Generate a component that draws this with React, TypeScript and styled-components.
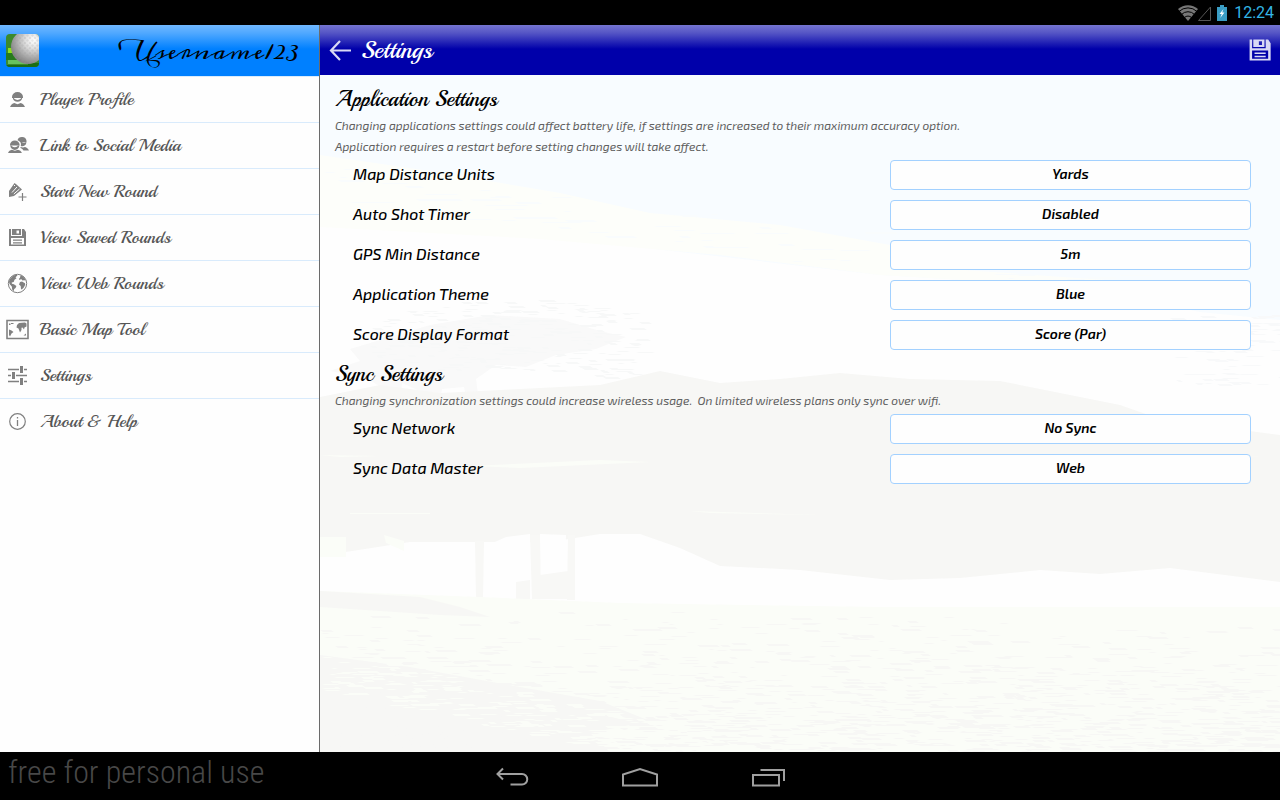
import React, { useId } from "react";
import styled, { createGlobalStyle } from "styled-components";

const script = `Playball, "Liberation Serif", serif`;
const signature = `Meddon, Playball, "Liberation Serif", serif`;
const sans = `"Exo 2", "Open Sans", sans-serif`;

const GlobalStyle = createGlobalStyle`
  *, *::before, *::after { box-sizing: border-box; }
  body { margin: 0; background: #000; font-family: ${sans}; }
`;

const Page = styled.div`
  min-height: 100vh;
  display: flex;
  flex-direction: column;
`;

const StatusBar = styled.header`
  height: 25px;
  padding: 0 6px 0 0;
  display: flex;
  justify-content: flex-end;
  align-items: center;
  background: #000;
  color: #33b5e5;
  font: 400 16px/24px Roboto, sans-serif;
`;

const StatusIcons = styled.svg`
  display: block;
  margin-right: 6px;
`;

const Body = styled.div`
  flex: 1;
  display: grid;
  grid-template-columns: minmax(0, 1fr) minmax(0, 3fr);
`;

const Sidebar = styled.aside`
  background: #fefefe;
  border-right: 1px solid #6b6b6b;
`;

const UserHeader = styled.div`
  height: 52px;
  padding: 0 20px 0 6px;
  display: flex;
  align-items: center;
  justify-content: space-between;
  background: linear-gradient(#70b8ff 0, #50a8ff 8px, #0080ff 24px);
  border-bottom: 1px solid #d9ebfc;
`;

const UserName = styled.span`
  font: 400 23px/46px ${signature};
  color: #000;
`;

const Menu = styled.ul`
  list-style: none;
  margin: 0;
  padding: 0;
`;

const MenuItem = styled.li`
  &:not(:last-child) { border-bottom: 1px solid #d9ebfc; }
`;

const MenuLink = styled.a`
  height: 45px;
  padding-left: 5px;
  display: flex;
  align-items: center;
  gap: 10px;
  color: #555;
  font: 400 18px/24px ${script};
  text-decoration: none;
`;

const MenuLabel = styled.span`
  padding-bottom: 2px;
`;

const MenuIcon = styled.svg`
  width: 25px;
  height: 25px;
  flex: none;
  color: #808080;
`;

const Main = styled.main`
  position: relative;
  isolation: isolate;
  background: #fefefe;
  overflow: hidden;
`;

const Backdrop = styled.svg`
  position: absolute;
  inset: 50px 0 0;
  width: 100%;
  height: calc(100% - 50px);
  z-index: -1;
`;

const TitleBar = styled.div`
  height: 50px;
  padding: 0 8px;
  display: flex;
  align-items: center;
  gap: 8px;
  color: #fff;
  background: linear-gradient(#7474d0 0, #5555c5 8px, #0000aa 24px);
`;

const Title = styled.h1`
  flex: 1;
  margin: 0;
  font: 400 25px/30px ${script};
`;

const IconButton = styled.button`
  padding: 0;
  border: 0;
  background: none;
  color: #d9d9f5;
  display: grid;
  place-items: center;
  cursor: pointer;
`;

const Section = styled.section`
  padding: 9px 29px 0 15px;
`;

const SectionTitle = styled.h2`
  margin: 0 0 1px;
  font: 400 22px/30px ${script};
  color: #000;
`;

const Note = styled.p`
  margin: 0 0 3px;
  font: italic 400 12px/21px ${sans};
  color: #606060;
  white-space: pre-line;
`;

const Rows = styled.div`
  padding-left: 18px;
  display: grid;
  gap: 10px;
`;

const Row = styled.div`
  display: grid;
  grid-template-columns: 537fr 361fr;
  align-items: start;
`;

const RowLabel = styled.label`
  font: italic 500 16px/28px ${sans};
  color: #000;
`;

const Choice = styled.select`
  appearance: none;
  width: 100%;
  height: 30px;
  padding: 0 4px 2px;
  border: 1px solid #a3d1ff;
  border-radius: 4px;
  background: #fefefe;
  color: #000;
  font: italic 600 14px/26px ${sans};
  text-align: center;
  text-align-last: center;
`;

const NavBar = styled.footer`
  height: 48px;
  display: grid;
  grid-template-columns: 1fr auto 1fr;
  background: #000;
`;

const Watermark = styled.span`
  padding-left: 8px;
  font: 300 32px/40px "Roboto Condensed", Roboto, sans-serif;
  color: #484848;
  white-space: nowrap;
`;

const NavButtons = styled.nav`
  display: grid;
  grid-template-columns: repeat(3, 128px);
  padding-top: 2px;
`;

const Floppy = () => (
  <>
    <path
      fill="currentColor"
      fillRule="evenodd"
      d="M4 4h2v7h11V4h2l2 3v14H4zM6 13v6.500h13V13z"
    />
    <path fill="currentColor" d="M7 4h4.500v6H7zM14 4h2v6h-2zM11 4h4v1.500h-4zM11 8.500h4V10h-4zM8 14.500h9v1.200H8zM8 17.200h9v1.200H8z" />
  </>
);

const icons: Record<string, React.ReactNode> = {
  player: (
    <g fill="currentColor">
      <path d="M7 10a5.500 5 0 0 1 11 0v1H7z" />
      <path d="M7.800 11h1.200v.6q3.500 2.600 7 0V11h1.200a4.800 4.800 0 0 1-9.400 0z" />
      <path d="M5 20c1-2.400 2.500-3.600 4.300-4l3.200 1.200 3.200-1.200c1.800.4 3.300 1.600 4.300 4z" />
    </g>
  ),
  social: (
    <g fill="currentColor">
      <path d="M12.500 7.200a4.600 4.400 0 0 1 9 .6v1.400h-6.200a6 6 0 0 0-2.800-2z" />
      <path d="M15.500 9h1.500q1.800 1.600 3.500.2h.9a4.200 4.200 0 0 1-5.600 3.900q.6-1.800-.3-4.100z" />
      <path d="M15.500 14l2.500.6 2-.6c1.700.6 3.200 1.700 4 3.600h-5.500c-.7-1.200-1.500-2-3-2.600z" />
      <path d="M5 11.800a4.800 4.400 0 0 1 9.600 0v.8H5z" />
      <path d="M5.300 12.400h1.300v.6q3.200 2.400 6.200 0v-.6h1.500a4.500 4.500 0 0 1-9 0z" />
      <path d="M3 20c.8-2 2-2.900 3.900-3.300l3 1 3-1c1.900.4 3.200 1.300 4 3.300z" />
    </g>
  ),
  round: (
    <>
      <path fill="currentColor" d="M9.500 4l2 1.500 5.500 5-8 6.500-5 1v-6z" />
      <path d="M7 13.500l5-5.500M8.800 15l5.700-5M10 6l-1 1" stroke="#fefefe" fill="none" />
      <path d="M17.500 14v8M13.500 18h8" stroke="currentColor" strokeWidth="1.200" />
    </>
  ),
  saved: <Floppy />,
  web: (
    <>
      <circle cx="12.500" cy="12.500" r="9.200" fill="none" stroke="currentColor" />
      <path
        fill="currentColor"
        d="M4.500 8.500L8 4.800l3.500-1.300 1 1-2 1.700 1 1-2 1.600-.8 2.200-2 .6.200 1.200 2 .4 2.500 1.700-.8 2.200-1.400.8-.5 2.300-1.500-1.800-.4-3L4.500 13l-.5-2.500zM15.500 4.300l2 .7 2.200 2.200.9 2.200-1.600-.2-1.500.2-1.400-1.400-1.400 1L13.800 8l1.200-1.200zM15 11l2-.5 3 1.800.2 1.500-1.400 2.700-2 2-.8-.4-.3-3-1.700-1.500z"
      />
    </>
  ),
  map: (
    <>
      <path d="M2 3.500h21v18H2z" fill="none" stroke="currentColor" strokeWidth="1.600" />
      <path
        fill="currentColor"
        d="M4 6.500h1.500V8H4zM6 6h2.500v1H6zM4 12.500l2.500 1L8.500 15l-2 1.500L5 19.500 4 18zM12 8l2-2 6-.5 1.500 1v3l-2 1-.5 2-1.500-2-1 .2v2.300l-1.500 2.500-1.500-4-2-1zM18.500 18.500l2.500-2v2z"
      />
    </>
  ),
  settings: (
    <g stroke="currentColor" fill="none">
      <path strokeWidth="1.400" d="M3 6.500h11M19 6.500h3M3 12.500h3M11 12.500h11M3 18.500h11M19 18.500h3" />
      <path strokeWidth="3" d="M16.500 3v7M8.500 9v7M16.500 15v7" />
    </g>
  ),
  about: (
    <>
      <circle cx="12.500" cy="12.500" r="7.800" fill="none" stroke="currentColor" strokeWidth="1.200" />
      <path stroke="currentColor" strokeWidth="1.300" d="M12.500 11v6M12.500 8v1.500" />
    </>
  ),
};

const menu = [
  ["player", "Player Profile"],
  ["social", "Link to Social Media"],
  ["round", "Start New Round"],
  ["saved", "View Saved Rounds"],
  ["web", "View Web Rounds"],
  ["map", "Basic Map Tool"],
  ["settings", "Settings"],
  ["about", "About & Help"],
];

const GolfBall = () => (
  <svg width="33" height="33" viewBox="0 0 33 33" aria-hidden="true">
    <defs>
      <clipPath id="tile"><rect width="33" height="33" rx="4" /></clipPath>
      <radialGradient id="ball" cx=".66" cy=".3" r=".7">
        <stop offset="0" stopColor="#fff" />
        <stop offset=".35" stopColor="#dedede" />
        <stop offset="1" stopColor="#858585" />
      </radialGradient>
      <pattern id="dimples" width="5" height="5" patternUnits="userSpaceOnUse">
        <circle cx="1.500" cy="1.500" r="1.200" fill="#999" opacity=".22" />
        <circle cx="4" cy="4" r="1.200" fill="#999" opacity=".22" />
      </pattern>
    </defs>
    <g clipPath="url(#tile)">
      <path fill="#3c8a2c" d="M0 0h33v33H0z" />
      <path fill="#8be01c" d="M2 14h6v5H2z" />
      <path fill="#267a1c" d="M0 19h33v7H0z" />
      <path fill="#67c25e" d="M2 26h18l5 4H2z" />
      <path fill="#1b6d14" d="M22 29h11v4H0v-2h22z" />
      <circle cx="22" cy="13" r="17" fill="url(#ball)" />
      <circle cx="22" cy="13" r="17" fill="url(#dimples)" />
    </g>
  </svg>
);

/* Horizontal flecks scattered over a region; a fixed seed keeps the scenery the same on each load. */
const flecks = (seed: number, count: number, place: (a: number, b: number) => [number, number], maxW: number) => {
  let s = seed;
  const rnd = () => (s = (s * 16807) % 2147483647) / 2147483647;
  rnd();
  let d = "";
  for (let i = 0; i < count; i++) {
    const [x, y] = place(rnd(), rnd()).map(Math.round);
    const w = Math.round(4 + rnd() * maxW);
    const h = rnd() > 0.6 ? 2 : 1;
    d += `M${x} ${y}h${w}l3 ${h}h-${w}z`;
  }
  return d;
};

const grass = flecks(7, 1400, (a, b) => [a * 960, 535 + Math.sqrt(b) * 142], 18);
const shadowEdge = flecks(21, 260, (a, b) => [a * 420, 575 + a * 90 + b * 40], 16);
const leaves = flecks(33, 260, (a, b) => [50 + a * 270, 240 + b * 70 - Math.sin(a * 3.1) * 16], 12);
const farLeaves = flecks(45, 90, (a, b) => [850 + a * 110, 240 + b * 70], 14);
const haze = flecks(51, 90, (a, b) => [a * 900, 90 + a * 110 + b * 40], 40);

const Course = () => (
  <Backdrop viewBox="0 0 960 677" preserveAspectRatio="none" aria-hidden="true">
    <path fill="#f8fcff" d="M0 0h960v245l-80-8-120-25-200-12-260-30L0 85z" />
    <path fill="#fdfefa" d="M0 80l110 16 130 22 90 20 130 12 110 20 60 24 170 12-40 6-200-12-160-20-180-16L0 152z" />
    <path fill="#f9fcfd" d={haze} />
    <path
      fill="#f9f9f9"
      d="M110 250l60-10 70 4 40 12 26 6-30 12-40 6-30 12-30-2-20 14 6 46h-10l-8-38-22 2-6 48h-8l-4-44-22-10-4 46h-12l2-38-24-14-34-6 30-10-10-12z"
    />
    <path fill="#f7f8f8" d={leaves} />
    <path fill="#f8f9fa" d={farLeaves} />
    <path
      fill="#f7f7f5"
      d="M0 322l60-12 60 8 80-4 80-4 60-14 60 12 60-4 60-6 70 6 90 2 60 12 60 12 40 14 120 16v147l-110-14-70 6-60-4-80 8-70 2-90-10-80-4-40-18-40-14h-40l-50 8H90l-90 14z"
    />
    <path fill="#fbfdf8" d="M0 462h26v20H0zM64 460l20 6v10l-18-8zM0 380l60 1-40 1zM150 391l130-6 50 2-130 6zM30 438h80v1H30zM370 436l130 4-110-2zM700 380l260 2-200 1z" />
    <path fill="#fefefe" d="M168 470l18-8 24-3v60h-44zM220 459l26 1-2 60-26-4z" />
    <path fill="#f8f8f6" d="M155 466h9l-1 58h-7zM210 460h10l1 64h-9zM248 460h7v65h-8zM196 507l14-2v19h-14zM220 500l28-4v28h-28z" />
    <path fill="#fbfdf8" d="M0 516l160 6 140 6 260 4h400v145H0z" />
    <path fill="#f7f7f5" d="M0 516l100 6 40 10 30 10-50-2L0 532zM0 580l90 12 110 20 80 14 50 20-60 12 20 19H0z" />
    <path fill="#f7f7f5" d={grass} />
    <path fill="#fbfdf8" d={shadowEdge} />
  </Backdrop>
);

type SettingProps = { label: string; value: string; options: string[] };

const Setting = ({ label, value, options }: SettingProps) => {
  const id = useId();
  return (
    <Row>
      <RowLabel htmlFor={id}>{label}</RowLabel>
      <Choice id={id} defaultValue={value}>
        {options.map((o) => <option key={o}>{o}</option>)}
      </Choice>
    </Row>
  );
};

const appSettings: SettingProps[] = [
  { label: "Map Distance Units", value: "Yards", options: ["Yards"] },
  { label: "Auto Shot Timer", value: "Disabled", options: ["Disabled"] },
  { label: "GPS Min Distance", value: "5m", options: ["5m"] },
  { label: "Application Theme", value: "Blue", options: ["Blue"] },
  { label: "Score Display Format", value: "Score (Par)", options: ["Score (Par)"] },
];

const syncSettings: SettingProps[] = [
  { label: "Sync Network", value: "No Sync", options: ["No Sync"] },
  { label: "Sync Data Master", value: "Web", options: ["Web"] },
];

export default function App() {
  return (
    <Page>
      <GlobalStyle />
      <StatusBar>
        <StatusIcons width="50" height="18" viewBox="0 0 50 18" aria-hidden="true">
          <path fill="#777" d="M0 5a15 15 0 0 1 20 0L10 17z" />
          <path
            d="M1 7.500a13 13 0 0 1 18 0M3.500 10.500a9 9 0 0 1 13 0M6.500 13.500a5 5 0 0 1 7 0"
            fill="none"
            stroke="#000"
            strokeWidth="1"
          />
          <path d="M20.500 16.500h12V3z" fill="none" stroke="#555" />
          <path fill="#3a9dc4" d="M42 1h4v2h3v14H39V3h3z" />
          <path fill="#fff" d="M45.500 5l-4 5h2.200l-1.500 4 4.200-5.500h-2.200z" />
        </StatusIcons>
        <time>12:24</time>
      </StatusBar>

      <Body>
        <Sidebar>
          <UserHeader>
            <GolfBall />
            <UserName>Username123</UserName>
          </UserHeader>
          <Menu>
            {menu.map(([icon, label]) => (
              <MenuItem key={label}>
                <MenuLink href="#">
                  <MenuIcon viewBox="0 0 25 25" aria-hidden="true">{icons[icon]}</MenuIcon>
                  <MenuLabel>{label}</MenuLabel>
                </MenuLink>
              </MenuItem>
            ))}
          </Menu>
        </Sidebar>

        <Main>
          <Course />
          <TitleBar>
            <IconButton aria-label="Back">
              <svg width="25" height="25" viewBox="0 0 25 25">
                <path d="M12 3L3 12.500 12 22M3 12.500h20" fill="none" stroke="currentColor" strokeWidth="2.200" />
              </svg>
            </IconButton>
            <Title>Settings</Title>
            <IconButton aria-label="Save">
              <svg width="25" height="26" viewBox="2 2 20 21"><Floppy /></svg>
            </IconButton>
          </TitleBar>

          <Section>
            <SectionTitle>Application Settings</SectionTitle>
            <Note>
              {"Changing applications settings could affect battery life, if settings are increased to their maximum accuracy option.\nApplication requires a restart before setting changes will take affect."}
            </Note>
            <Rows>{appSettings.map((s) => <Setting key={s.label} {...s} />)}</Rows>
          </Section>

          <Section>
            <SectionTitle>Sync Settings</SectionTitle>
            <Note>
              {"Changing synchronization settings could increase wireless usage.\u00a0 On limited wireless plans only sync over wifi."}
            </Note>
            <Rows>{syncSettings.map((s) => <Setting key={s.label} {...s} />)}</Rows>
          </Section>
        </Main>
      </Body>

      <NavBar>
        <Watermark>free for personal use</Watermark>
        <NavButtons aria-label="System">
          <IconButton aria-label="Back">
            <svg width="34" height="20" viewBox="0 0 34 20" fill="none" stroke="#a0a0a0" strokeWidth="2">
              <path d="M8 1.500L2.500 7 8 12.500M2.500 7H27a5 5 0 0 1 0 10.500H15.500" />
            </svg>
          </IconButton>
          <IconButton aria-label="Home">
            <svg width="36" height="20" viewBox="0 0 36 20" fill="none" stroke="#a0a0a0" strokeWidth="2">
              <path d="M1 18.500V7.500L18 2l17 5.500v11z" />
            </svg>
          </IconButton>
          <IconButton aria-label="Recent apps">
            <svg width="34" height="20" viewBox="0 0 34 20" fill="none" stroke="#a0a0a0" strokeWidth="2">
              <path d="M2 8h26v10.500H2zM9.500 3H33v11" />
            </svg>
          </IconButton>
        </NavButtons>
      </NavBar>
    </Page>
  );
}
